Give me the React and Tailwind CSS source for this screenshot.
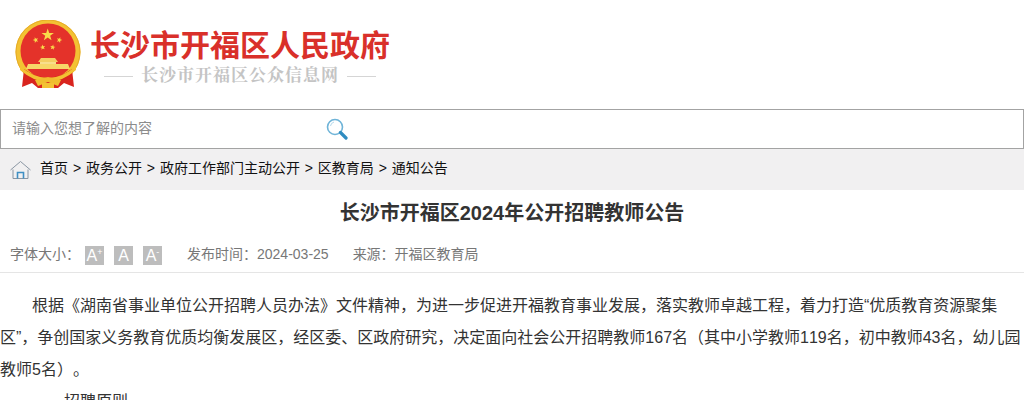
import { useState } from 'react'

const cjk = 'font-["Liberation_Sans","Noto_Sans_CJK_SC",sans-serif]'

function Star({ cx, cy, r, rotate = 0 }) {
  const pts = []
  for (let i = 0; i < 10; i++) {
    const rad = i % 2 === 0 ? r : r * 0.4
    const a = (Math.PI / 5) * i - Math.PI / 2
    pts.push(`${(cx + rad * Math.cos(a)).toFixed(2)},${(cy + rad * Math.sin(a)).toFixed(2)}`)
  }
  return <polygon points={pts.join(' ')} fill="#f9dc4a" transform={`rotate(${rotate} ${cx} ${cy})`} />
}

function Emblem() {
  return (
    <svg width="70" height="72" viewBox="0 0 70 72" className="shrink-0">
      {/* gold ring */}
      <circle cx="35" cy="32" r="32.5" fill="#f3c233" />
      <circle cx="35" cy="32" r="32" fill="none" stroke="#e6ab28" strokeWidth="1" />
      <circle cx="35" cy="31" r="27.5" fill="#e4322a" />
      {/* stars */}
      <Star cx={34.7} cy={15} r={6.5} />
      <Star cx={22.7} cy={20} r={3} rotate={-20} />
      <Star cx={46.3} cy={20} r={3} rotate={20} />
      <Star cx={29.7} cy={27.3} r={2.8} rotate={-10} />
      <Star cx={39.7} cy={27.3} r={2.8} rotate={10} />
      {/* tiananmen */}
      <path d="M28 38 L42 38 L45 42 L25 42 Z" fill="#f4cf62" />
      <rect x="27" y="42" width="16" height="2" fill="#f8df8c" />
      <path d="M15 44 L55 44 L57 49 L13 49 Z" fill="#f7d768" />
      {/* ribbon */}
      <path d="M11 49 Q35 66 59 49 L61 67 L51 63 L45 68 L25 68 L19 63 L9 67 Z" fill="#d9241e" />
      {/* wheat band and knot */}
      <path d="M7 46 Q35 70 63 46 L63 50 Q35 74 7 50 Z" fill="#f3c233" />
      <path d="M22 60 L35 57 L48 60 L45 66 L35 62 L25 66 Z" fill="#f0bd2e" />
      <rect x="29" y="63" width="12" height="5" fill="#f3c233" />
    </svg>
  )
}

function HomeIcon() {
  return (
    <svg width="22" height="20" viewBox="0 0 22 20" fill="none" className="shrink-0">
      <path d="M0.5 10 L10.5 1.5 L20.5 10" stroke="#8a96a3" strokeWidth="1" />
      <path d="M3 9.5 V18.5 H18 V9.5" stroke="#8a96a3" strokeWidth="1" />
      <path d="M7.5 18.5 V12.5 H13.5 V18.5" stroke="#3f8fc4" strokeWidth="1.6" />
    </svg>
  )
}

function SearchIcon() {
  return (
    <svg width="22" height="22" viewBox="0 0 22 22" fill="none">
      <circle cx="9" cy="9" r="7.5" stroke="#6fb4d8" strokeWidth="1.6" />
      <path d="M4.5 8 A5 5 0 0 1 8 4" stroke="#b5d9ec" strokeWidth="1" />
      <path d="M14.5 14.5 L20 20" stroke="#2f8cc0" strokeWidth="3.2" strokeLinecap="round" />
    </svg>
  )
}

function FontButton({ sup, onClick }) {
  return (
    <button onClick={onClick} className="flex justify-center w-[19px] h-[19px] bg-[#bdbdbd] text-white text-[16px] leading-[20px]">
      <span>A</span>
      {sup && <span className="text-[9px] leading-[12px]">{sup}</span>}
    </button>
  )
}

export default function App() {
  const [size, setSize] = useState(16)

  return (
    <div className={`h-[400px] overflow-hidden bg-white ${cjk}`}>
      {/* Header */}
      <header className="flex items-center h-[109px] pl-[13px] pt-[3px]">
        <Emblem />
        <div className="ml-[8px] mt-[3px] -translate-x-px">
          <h1 className="text-[30px] leading-[36px] font-bold text-[#d9302a]">长沙市开福区人民政府</h1>
          <div className="flex items-center mt-[1px] ml-[14px]">
            <span className="w-[29px] h-px bg-[#d5d5d5]"></span>
            <span className="mx-[8px] text-[17px] leading-[22px] font-bold text-[#c4c4c4] tracking-[1px] font-['Liberation_Serif','Noto_Serif_CJK_SC','Noto_Sans_CJK_SC',serif]">长沙市开福区公众信息网</span>
            <span className="w-[29px] h-px bg-[#d5d5d5]"></span>
          </div>
        </div>
      </header>

      {/* Search */}
      <div className="flex items-center h-[40px] border border-[#a3a3a3] pl-[11px]">
        <span className="w-[314px] pb-[2px] text-[14px] text-[#8c8c8c]">请输入您想了解的内容</span>
        <SearchIcon />
      </div>

      {/* Breadcrumb */}
      <nav className="flex items-center gap-[8px] h-[41px] bg-[#f1f0f1] pl-[10px] text-[14px] text-[#111]">
        <HomeIcon />
        <span className="pb-[2px] [word-spacing:1px]">首页 &gt; 政务公开 &gt; 政府工作部门主动公开 &gt; 区教育局 &gt; 通知公告</span>
      </nav>

      {/* Article head */}
      <h2 className="text-center text-[20px] leading-[28px] font-bold text-[#333] mt-[9px]">长沙市开福区2024年公开招聘教师公告</h2>
      <div className="flex items-center h-[38px] mt-[8px] pl-[10px] pt-[4px] border-b border-[#e5e5e5] text-[14px] text-[#777]">
        <span className="pb-[2px]">字体大小：</span>
        <div className="flex gap-[10px] ml-[5px]">
          <FontButton sup="+" onClick={() => setSize(size + 2)} />
          <FontButton onClick={() => setSize(16)} />
          <FontButton sup="-" onClick={() => setSize(size - 2)} />
        </div>
        <span className="ml-[25px] pb-[2px]">发布时间：2024-03-25</span>
        <span className="ml-[24px] pb-[2px]">来源：开福区教育局</span>
      </div>

      {/* Article body */}
      <div className="mt-[17px] text-[#333] leading-[32px] [text-spacing-trim:space-all] [font-kerning:none]" style={{ fontSize: size }}>
        <p className="indent-[32px]">根据《湖南省事业单位公开招聘人员办法》文件精神，为进一步促进开福教育事业发展，落实教师卓越工程，着力打造“优质教育资源聚集区”，争创国家义务教育优质均衡发展区，经区委、区政府研究，决定面向社会公开招聘教师167名（其中小学教师119名，初中教师43名，幼儿园教师5名）。</p>
        <p className="indent-[64px]">招聘原则</p>
      </div>
    </div>
  )
}
